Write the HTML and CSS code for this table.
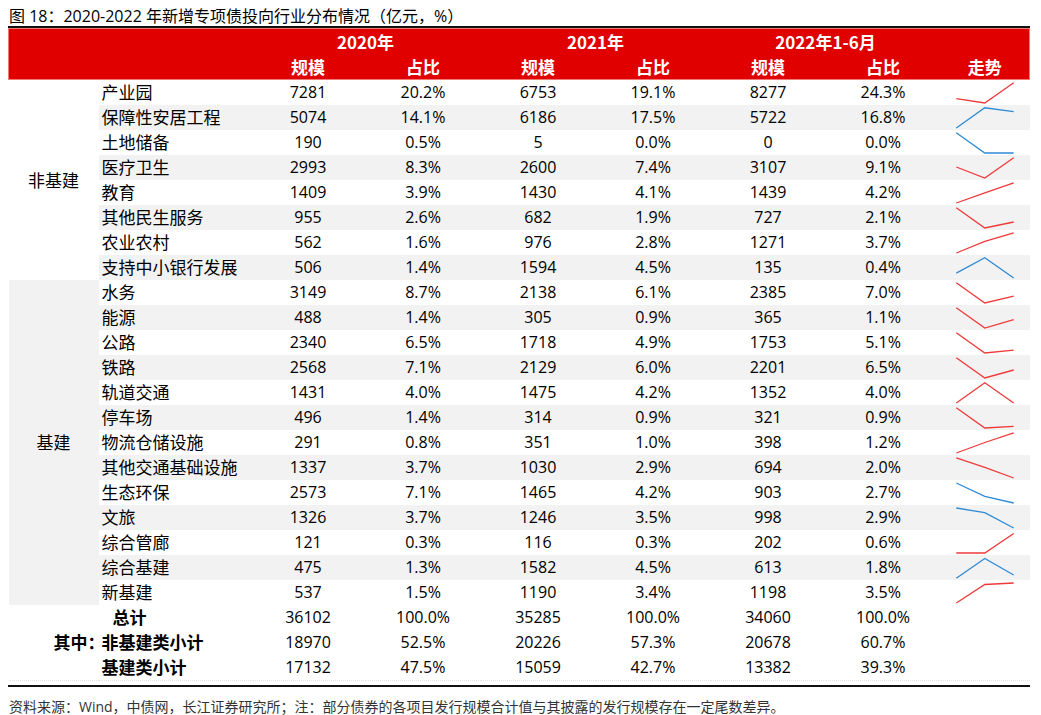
FILE: index.html
```html
<!DOCTYPE html>
<html lang="zh-CN">
<head>
<meta charset="utf-8">
<title>新增专项债投向行业分布情况</title>
<link rel="stylesheet" href="styles.css">
</head>
<body>
<div class="page">
  <div class="title">图 18：2020-2022 年新增专项债投向行业分布情况（亿元，%）</div>
  <table class="tbl">
    <colgroup>
      <col class="c-cat"><col class="c-name">
      <col class="c-num"><col class="c-num"><col class="c-num"><col class="c-num"><col class="c-num"><col class="c-num">
      <col class="c-trend">
    </colgroup>
    <thead>
      <tr class="h1">
        <th colspan="2" class="first"></th>
        <th colspan="2">2020年</th>
        <th colspan="2">2021年</th>
        <th colspan="2">2022年1-6月</th>
        <th class="last"></th>
      </tr>
      <tr class="h2">
        <th colspan="2" class="first"></th>
        <th>规模</th><th>占比</th>
        <th>规模</th><th>占比</th>
        <th>规模</th><th>占比</th>
        <th class="last">走势</th>
      </tr>
    </thead>
    <tbody>
      <tr>
        <td class="cat" rowspan="8">非基建</td>
        <td class="name">产业园</td><td>7281</td><td>20.2%</td><td>6753</td><td>19.1%</td><td>8277</td><td>24.3%</td>
        <td class="trend"><svg viewBox="0 0 89 25" width="89" height="25"><polyline class="up" points="15.3,18.7 43.8,23 72.7,2.8"/></svg></td>
      </tr>
      <tr class="alt">
        <td class="name">保障性安居工程</td><td>5074</td><td>14.1%</td><td>6186</td><td>17.5%</td><td>5722</td><td>16.8%</td>
        <td class="trend"><svg viewBox="0 0 89 25" width="89" height="25"><polyline class="down" points="15.3,23 43.8,2.8 72.7,6.6"/></svg></td>
      </tr>
      <tr>
        <td class="name">土地储备</td><td>190</td><td>0.5%</td><td>5</td><td>0.0%</td><td>0</td><td>0.0%</td>
        <td class="trend"><svg viewBox="0 0 89 25" width="89" height="25"><polyline class="down" points="15.3,2.8 43.8,23 72.7,23"/></svg></td>
      </tr>
      <tr class="alt">
        <td class="name">医疗卫生</td><td>2993</td><td>8.3%</td><td>2600</td><td>7.4%</td><td>3107</td><td>9.1%</td>
        <td class="trend"><svg viewBox="0 0 89 25" width="89" height="25"><polyline class="up" points="15.3,12 43.8,23 72.7,2.8"/></svg></td>
      </tr>
      <tr>
        <td class="name">教育</td><td>1409</td><td>3.9%</td><td>1430</td><td>4.1%</td><td>1439</td><td>4.2%</td>
        <td class="trend"><svg viewBox="0 0 89 25" width="89" height="25"><polyline class="up" points="15.3,23 43.8,12.9 72.7,2.8"/></svg></td>
      </tr>
      <tr class="alt">
        <td class="name">其他民生服务</td><td>955</td><td>2.6%</td><td>682</td><td>1.9%</td><td>727</td><td>2.1%</td>
        <td class="trend"><svg viewBox="0 0 89 25" width="89" height="25"><polyline class="up" points="15.3,2.8 43.8,23 72.7,17"/></svg></td>
      </tr>
      <tr>
        <td class="name">农业农村</td><td>562</td><td>1.6%</td><td>976</td><td>2.8%</td><td>1271</td><td>3.7%</td>
        <td class="trend"><svg viewBox="0 0 89 25" width="89" height="25"><polyline class="up" points="15.3,23 43.8,11.3 72.7,2.8"/></svg></td>
      </tr>
      <tr class="alt">
        <td class="name">支持中小银行发展</td><td>506</td><td>1.4%</td><td>1594</td><td>4.5%</td><td>135</td><td>0.4%</td>
        <td class="trend"><svg viewBox="0 0 89 25" width="89" height="25"><polyline class="down" points="15.3,18.1 43.8,2.8 72.7,23"/></svg></td>
      </tr>
      <tr>
        <td class="cat cat-base" rowspan="13">基建</td>
        <td class="name">水务</td><td>3149</td><td>8.7%</td><td>2138</td><td>6.1%</td><td>2385</td><td>7.0%</td>
        <td class="trend"><svg viewBox="0 0 89 25" width="89" height="25"><polyline class="up" points="15.3,2.8 43.8,23 72.7,16.2"/></svg></td>
      </tr>
      <tr class="alt">
        <td class="name">能源</td><td>488</td><td>1.4%</td><td>305</td><td>0.9%</td><td>365</td><td>1.1%</td>
        <td class="trend"><svg viewBox="0 0 89 25" width="89" height="25"><polyline class="up" points="15.3,2.8 43.8,23 72.7,14.6"/></svg></td>
      </tr>
      <tr>
        <td class="name">公路</td><td>2340</td><td>6.5%</td><td>1718</td><td>4.9%</td><td>1753</td><td>5.1%</td>
        <td class="trend"><svg viewBox="0 0 89 25" width="89" height="25"><polyline class="up" points="15.3,2.8 43.8,23 72.7,20.2"/></svg></td>
      </tr>
      <tr class="alt">
        <td class="name">铁路</td><td>2568</td><td>7.1%</td><td>2129</td><td>6.0%</td><td>2201</td><td>6.5%</td>
        <td class="trend"><svg viewBox="0 0 89 25" width="89" height="25"><polyline class="up" points="15.3,2.8 43.8,23 72.7,15"/></svg></td>
      </tr>
      <tr>
        <td class="name">轨道交通</td><td>1431</td><td>4.0%</td><td>1475</td><td>4.2%</td><td>1352</td><td>4.0%</td>
        <td class="trend"><svg viewBox="0 0 89 25" width="89" height="25"><polyline class="up" points="15.3,23 43.8,2.8 72.7,23"/></svg></td>
      </tr>
      <tr class="alt">
        <td class="name">停车场</td><td>496</td><td>1.4%</td><td>314</td><td>0.9%</td><td>321</td><td>0.9%</td>
        <td class="trend"><svg viewBox="0 0 89 25" width="89" height="25"><polyline class="up" points="15.3,2.8 43.8,23 72.7,21.3"/></svg></td>
      </tr>
      <tr>
        <td class="name">物流仓储设施</td><td>291</td><td>0.8%</td><td>351</td><td>1.0%</td><td>398</td><td>1.2%</td>
        <td class="trend"><svg viewBox="0 0 89 25" width="89" height="25"><polyline class="up" points="15.3,23 43.8,12.5 72.7,2.8"/></svg></td>
      </tr>
      <tr class="alt">
        <td class="name">其他交通基础设施</td><td>1337</td><td>3.7%</td><td>1030</td><td>2.9%</td><td>694</td><td>2.0%</td>
        <td class="trend"><svg viewBox="0 0 89 25" width="89" height="25"><polyline class="up" points="15.3,2.8 43.8,12.3 72.7,23"/></svg></td>
      </tr>
      <tr>
        <td class="name">生态环保</td><td>2573</td><td>7.1%</td><td>1465</td><td>4.2%</td><td>903</td><td>2.7%</td>
        <td class="trend"><svg viewBox="0 0 89 25" width="89" height="25"><polyline class="down" points="15.3,3 43.8,16.4 72.7,23"/></svg></td>
      </tr>
      <tr class="alt">
        <td class="name">文旅</td><td>1326</td><td>3.7%</td><td>1246</td><td>3.5%</td><td>998</td><td>2.9%</td>
        <td class="trend"><svg viewBox="0 0 89 25" width="89" height="25"><polyline class="down" points="15.3,3 43.8,7.6 72.7,23"/></svg></td>
      </tr>
      <tr>
        <td class="name">综合管廊</td><td>121</td><td>0.3%</td><td>116</td><td>0.3%</td><td>202</td><td>0.6%</td>
        <td class="trend"><svg viewBox="0 0 89 25" width="89" height="25"><polyline class="up" points="15.3,23 43.8,23 72.7,3.5"/></svg></td>
      </tr>
      <tr class="alt">
        <td class="name">综合基建</td><td>475</td><td>1.3%</td><td>1582</td><td>4.5%</td><td>613</td><td>1.8%</td>
        <td class="trend"><svg viewBox="0 0 89 25" width="89" height="25"><polyline class="down" points="15.3,23.3 43.8,3.4 72.7,20"/></svg></td>
      </tr>
      <tr>
        <td class="name">新基建</td><td>537</td><td>1.5%</td><td>1190</td><td>3.4%</td><td>1198</td><td>3.5%</td>
        <td class="trend"><svg viewBox="0 0 89 25" width="89" height="25"><polyline class="up" points="15.3,23 43.8,4.5 72.7,3"/></svg></td>
      </tr>
    </tbody>
    <tbody class="sum">
      <tr>
        <td colspan="2" class="total">总计</td>
        <td>36102</td><td>100.0%</td><td>35285</td><td>100.0%</td><td>34060</td><td>100.0%</td><td></td>
      </tr>
      <tr>
        <td class="among"><span>其中：</span></td><td class="name strong">非基建类小计</td>
        <td>18970</td><td>52.5%</td><td>20226</td><td>57.3%</td><td>20678</td><td>60.7%</td><td></td>
      </tr>
      <tr class="last-row">
        <td></td><td class="name strong">基建类小计</td>
        <td>17132</td><td>47.5%</td><td>15059</td><td>42.7%</td><td>13382</td><td>39.3%</td><td></td>
      </tr>
    </tbody>
  </table>
  <div class="footer">资料来源：Wind，中债网，长江证券研究所；注：部分债券的各项目发行规模合计值与其披露的发行规模存在一定尾数差异。</div>
</div>
</body>
</html>
```

FILE: styles.css
```css
html, body {
  margin: 0;
  padding: 0;
  background: #ffffff;
}

body {
  font-family: "Open Sans", "Noto Sans CJK SC", sans-serif;
  color: #000000;
}

.page {
  width: 1022px;
  margin-left: 8px;
}

.title {
  font-size: 16px;
  line-height: 20px;
  padding: 6px 0 0 1px;
  height: 20px;
  border-bottom: 2px solid #111111;
  white-space: nowrap;
}

.tbl {
  margin-top: 0;
  width: 1021px;
  table-layout: fixed;
  border-collapse: collapse;
  border-spacing: 0;
}

.c-cat { width: 90px; }
.c-name { width: 152px; }
.c-num { width: 115px; }
.c-trend { width: 89px; }

.tbl th,
.tbl td {
  padding: 0;
  height: 25px;
  line-height: 25px;
  text-align: center;
  vertical-align: middle;
  white-space: nowrap;
}

.tbl thead th {
  background: #e00000;
  color: #ffffff;
  font-family: "Noto Sans CJK SC", sans-serif;
  font-weight: 700;
  font-size: 17px;
}

.tbl thead tr.h1 th {
  border-top: 1px solid #f07a7a;
}

.tbl thead tr.h2 th {
  border-bottom: 1px solid #f07a7a;
}

.tbl thead th.first {
  border-left: 1px solid #f07a7a;
}

.tbl thead th.last {
  border-right: 1px solid #f07a7a;
}

.tbl td {
  font-size: 16px;
}

.tbl td.name {
  text-align: left;
  padding-left: 3px;
  font-size: 17px;
}

.tbl td.cat {
  font-size: 17px;
  background: #ffffff;
}

.tbl td.cat-base {
  background: #f2f2f2;
}

.tbl tbody tr.alt td {
  background: #f2f2f2;
}

.tbl tbody tr.alt td.cat {
  background: #ffffff;
}

.tbl tbody tr.alt td.cat-base {
  background: #f2f2f2;
}

.tbl td.trend {
  padding: 0;
}

.tbl td.trend svg {
  display: block;
  overflow: visible;
}

.tbl td.trend polyline {
  fill: none;
  stroke-width: 1.3;
  stroke-linejoin: miter;
}

.tbl td.trend polyline.up {
  stroke: #f03a3a;
}

.tbl td.trend polyline.down {
  stroke: #2f8bd6;
}

.sum td.total,
.sum td.strong,
.sum td.among {
  font-weight: 700;
  font-size: 17px;
}

.sum td.among {
  text-align: right;
}

.sum td.among span {
  display: inline-block;
  margin-right: -6px;
}

.sum tr.last-row td {
  border-bottom: 1px dotted #e4e4e4;
}

.footer {
  margin-top: 4px;
  border-top: 2px solid #111111;
  padding: 10px 0 0 1px;
  font-size: 14px;
  line-height: 20px;
  color: #333333;
  white-space: nowrap;
}
```
